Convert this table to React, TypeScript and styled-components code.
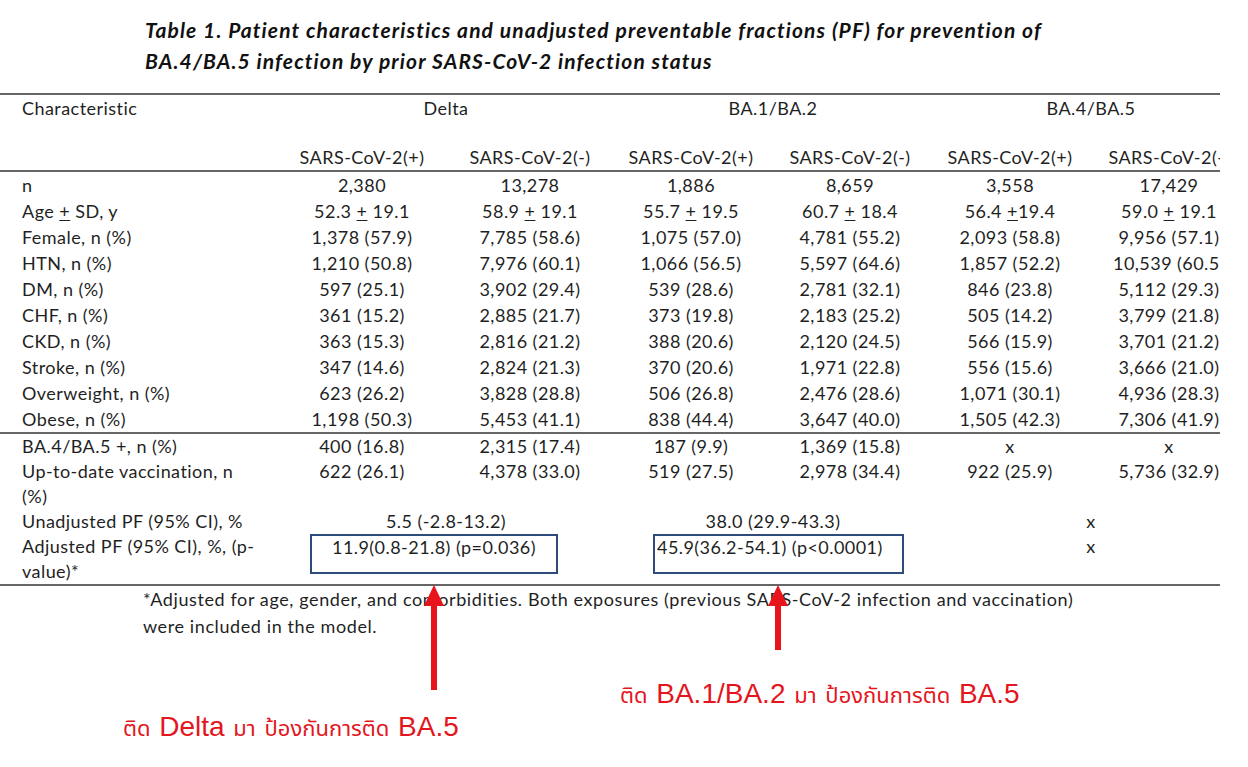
import React from "react";
import styled, { createGlobalStyle } from "styled-components";

const GlobalStyle = createGlobalStyle`
  html, body { margin: 0; padding: 0; background: #ffffff; }
  body { font-family: Lato, "Open Sans", sans-serif; color: #1f1f1f; }
`;

const Page = styled.div`
  position: relative;
  width: 1248px;
  height: 767px;
  overflow: hidden;
  background: #fff;
`;

const Title = styled.h1`
  margin: 0;
  padding: 14px 0 0 145px;
  font-family: Lato, sans-serif;
  font-weight: 700;
  font-style: italic;
  font-size: 21px;
  letter-spacing: 1.1px;
  line-height: 31px;
  color: #111;
  white-space: nowrap;
`;

const TableWrap = styled.div`
  margin-top: 17px;
  width: 1220px;
  overflow: hidden;
`;

const COLS = "278px 168px 168px 154px 164px 156px 162px";

const Table = styled.div`
  width: 1250px;
  font-size: 18px;
  letter-spacing: 0.45px;
  color: #1f1f1f;
`;

const Row = styled.div<{ $h?: number; $top?: boolean; $bottom?: boolean; $align?: string }>`
  display: grid;
  grid-template-columns: ${COLS};
  min-height: ${(p) => p.$h ?? 26}px;
  line-height: ${(p) => p.$h ?? 26}px;
  align-items: ${(p) => p.$align ?? "start"};
  border-top: ${(p) => (p.$top ? "2px solid #666" : "none")};
  border-bottom: ${(p) => (p.$bottom ? "2px solid #666" : "none")};
  box-sizing: border-box;
`;

const Label = styled.div`
  padding-left: 22px;
  width: 256px;
  white-space: nowrap;
`;

const Cell = styled.div<{ $span?: number }>`
  grid-column: span ${(p) => p.$span ?? 1};
  text-align: center;
  white-space: nowrap;
`;

const Pm = styled.span`
  text-decoration: underline;
  text-underline-offset: 2px;
`;

const Boxed = styled.div<{ $ml: number; $mr: number; $left?: boolean }>`
  grid-column: span 2;
  margin-left: ${(p) => p.$ml}px;
  margin-right: ${(p) => p.$mr}px;
  height: 40px;
  box-sizing: border-box;
  border: 2px solid #2f4b7c;
  line-height: 23px;
  text-align: ${(p) => (p.$left ? "left" : "center")};
  padding-left: ${(p) => (p.$left ? "2px" : "0")};
  white-space: nowrap;
`;

const Footnote = styled.p`
  margin: 0;
  padding-left: 143px;
  font-size: 18px;
  letter-spacing: 0.6px;
  line-height: 27px;
  color: #1f1f1f;
  white-space: nowrap;
`;

const Arrow = styled.svg<{ $x: number; $y: number }>`
  position: absolute;
  left: ${(p) => p.$x}px;
  top: ${(p) => p.$y}px;
  overflow: visible;
`;

const Note = styled.div<{ $x: number; $y: number }>`
  position: absolute;
  left: ${(p) => p.$x}px;
  top: ${(p) => p.$y}px;
  color: #e3161e;
  white-space: nowrap;
  line-height: 36px;
  font-family: "Noto Sans Thai", "Noto Sans Thai UI", "Loma", "Garuda", "Noto Sans", sans-serif;
  font-size: 22px;
  word-spacing: 3px;
`;

const Latin = styled.span`
  font-family: "Liberation Sans", Arial, sans-serif;
  font-size: 28px;
  word-spacing: 0;
`;

type R = { label: React.ReactNode; v: React.ReactNode[] };

const pm = (a: string, b: string, tight = false) => (
  <>
    {a} <Pm>+</Pm>
    {tight ? "" : " "}
    {b}
  </>
);

const rows1: R[] = [
  { label: "n", v: ["2,380", "13,278", "1,886", "8,659", "3,558", "17,429"] },
  {
    label: (
      <>
        Age <Pm>+</Pm> SD, y
      </>
    ),
    v: [
      pm("52.3", "19.1"),
      pm("58.9", "19.1"),
      pm("55.7", "19.5"),
      pm("60.7", "18.4"),
      pm("56.4", "19.4", true),
      pm("59.0", "19.1"),
    ],
  },
  { label: "Female, n (%)", v: ["1,378 (57.9)", "7,785 (58.6)", "1,075 (57.0)", "4,781 (55.2)", "2,093 (58.8)", "9,956 (57.1)"] },
  { label: "HTN, n (%)", v: ["1,210 (50.8)", "7,976 (60.1)", "1,066 (56.5)", "5,597 (64.6)", "1,857 (52.2)", "10,539 (60.5)"] },
  { label: "DM, n (%)", v: ["597 (25.1)", "3,902 (29.4)", "539 (28.6)", "2,781 (32.1)", "846 (23.8)", "5,112 (29.3)"] },
  { label: "CHF, n (%)", v: ["361 (15.2)", "2,885 (21.7)", "373 (19.8)", "2,183 (25.2)", "505 (14.2)", "3,799 (21.8)"] },
  { label: "CKD, n (%)", v: ["363 (15.3)", "2,816 (21.2)", "388 (20.6)", "2,120 (24.5)", "566 (15.9)", "3,701 (21.2)"] },
  { label: "Stroke, n (%)", v: ["347 (14.6)", "2,824 (21.3)", "370 (20.6)", "1,971 (22.8)", "556 (15.6)", "3,666 (21.0)"] },
  { label: "Overweight, n (%)", v: ["623 (26.2)", "3,828 (28.8)", "506 (26.8)", "2,476 (28.6)", "1,071 (30.1)", "4,936 (28.3)"] },
  { label: "Obese, n (%)", v: ["1,198 (50.3)", "5,453 (41.1)", "838 (44.4)", "3,647 (40.0)", "1,505 (42.3)", "7,306 (41.9)"] },
];

const UpArrow = ({ x, len }: { x: number; len: number }) => (
  <Arrow $x={x - 11} $y={585} width={22} height={len}>
    <polygon points={`11,0 21,21 1,21`} fill="#e8141b" />
    <rect x={8} y={19} width={6} height={len - 19} fill="#e8141b" />
  </Arrow>
);

export default function App() {
  return (
    <Page>
      <GlobalStyle />
      <Title>
        Table 1. Patient characteristics and unadjusted preventable fractions (PF) for prevention of
        <br />
        BA.4/BA.5 infection by prior SARS-CoV-2 infection status
      </Title>
      <TableWrap>
        <Table>
          <Row $top $h={27}>
            <Label>Characteristic</Label>
            <Cell $span={2}>Delta</Cell>
            <Cell $span={2}>BA.1/BA.2</Cell>
            <Cell $span={2}>BA.4/BA.5</Cell>
          </Row>
          <Row $bottom $h={50} $align="end" style={{ lineHeight: "26px" }}>
            <Label />
            <Cell>SARS-CoV-2(+)</Cell>
            <Cell>SARS-CoV-2(-)</Cell>
            <Cell>SARS-CoV-2(+)</Cell>
            <Cell>SARS-CoV-2(-)</Cell>
            <Cell>SARS-CoV-2(+)</Cell>
            <Cell>SARS-CoV-2(-)</Cell>
          </Row>
          {rows1.map((r, i) => (
            <Row key={i} $h={26} $bottom={i === rows1.length - 1}>
              <Label>{r.label}</Label>
              {r.v.map((v, j) => (
                <Cell key={j}>{v}</Cell>
              ))}
            </Row>
          ))}
          <Row $h={25}>
            <Label>BA.4/BA.5 +, n (%)</Label>
            <Cell>400 (16.8)</Cell>
            <Cell>2,315 (17.4)</Cell>
            <Cell>187 (9.9)</Cell>
            <Cell>1,369 (15.8)</Cell>
            <Cell>x</Cell>
            <Cell>x</Cell>
          </Row>
          <Row $h={25}>
            <Label>
              Up-to-date vaccination, n
              <br />
              (%)
            </Label>
            <Cell>622 (26.1)</Cell>
            <Cell>4,378 (33.0)</Cell>
            <Cell>519 (27.5)</Cell>
            <Cell>2,978 (34.4)</Cell>
            <Cell>922 (25.9)</Cell>
            <Cell>5,736 (32.9)</Cell>
          </Row>
          <Row $h={25}>
            <Label>Unadjusted PF (95% CI), %</Label>
            <Cell $span={2}>5.5 (-2.8-13.2)</Cell>
            <Cell $span={2}>38.0 (29.9-43.3)</Cell>
            <Cell $span={2}>x</Cell>
          </Row>
          <Row $h={25} $bottom>
            <Label>
              Adjusted PF (95% CI), %, (p-
              <br />
              value)*
            </Label>
            <Boxed $ml={32} $mr={56}>11.9(0.8-21.8) (p=0.036)</Boxed>
            <Boxed $ml={39} $mr={28} $left>
              45.9(36.2-54.1) (p&lt;0.0001)
            </Boxed>
            <Cell $span={2}>x</Cell>
          </Row>
        </Table>
      </TableWrap>
      <Footnote>
        *Adjusted for age, gender, and comorbidities. Both exposures (previous SARS-CoV-2 infection and vaccination)
        <br />
        were included in the model.
      </Footnote>
      <UpArrow x={434} len={105} />
      <UpArrow x={778} len={65} />
      <Note $x={620} $y={676}>
        ติด <Latin>BA.1/BA.2</Latin> มา ป้องกันการติด <Latin>BA.5</Latin>
      </Note>
      <Note $x={123} $y={709}>
        ติด <Latin>Delta</Latin> มา ป้องกันการติด <Latin>BA.5</Latin>
      </Note>
    </Page>
  );
}
